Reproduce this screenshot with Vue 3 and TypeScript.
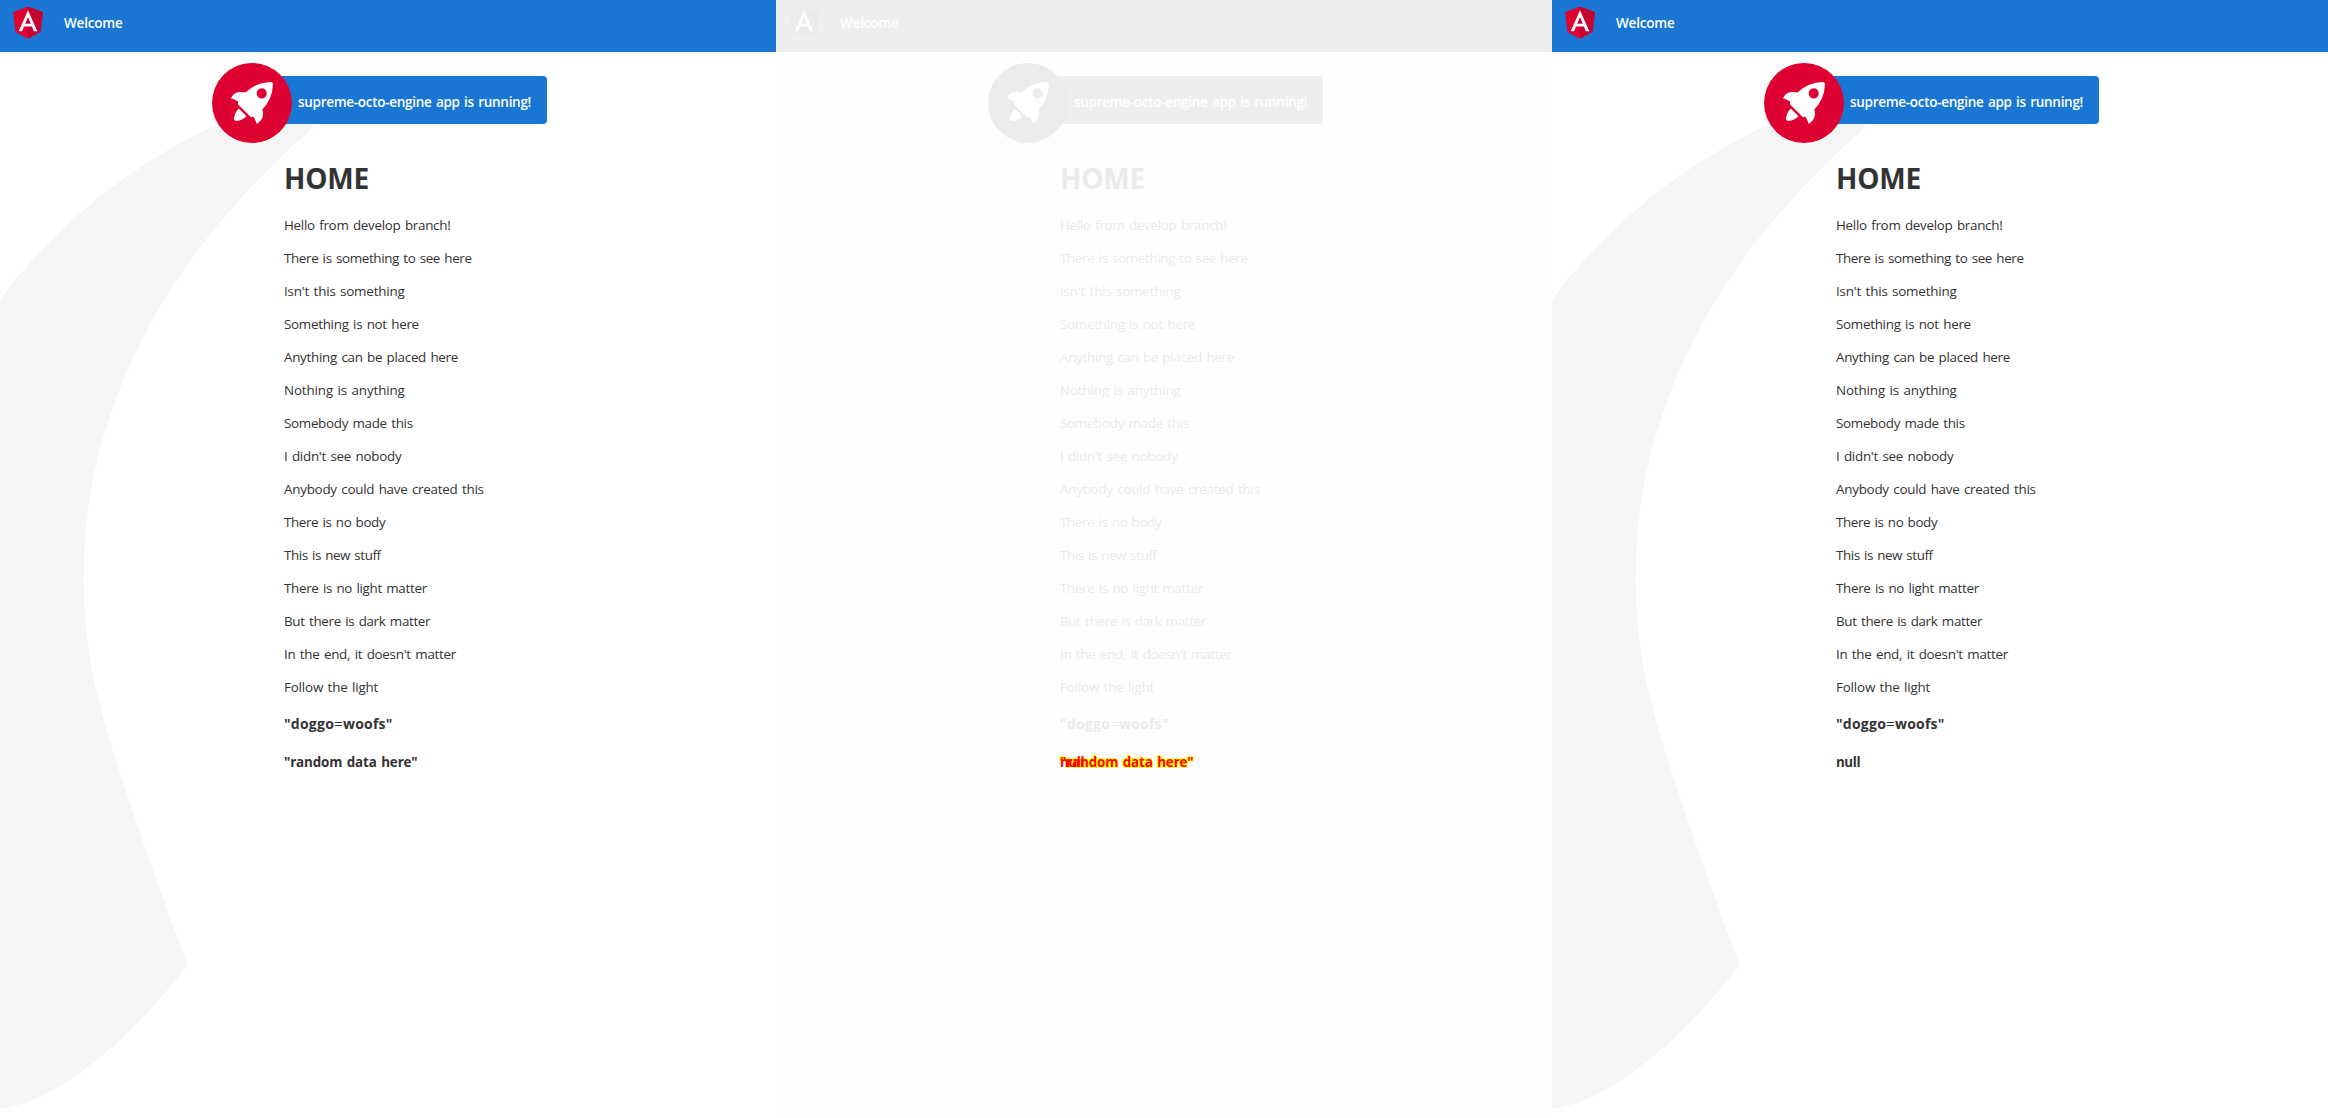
<script setup lang="ts">
interface Line {
  text: string
  tracking: number
}

interface Panel {
  id: string
  diff: boolean
  stored: Line
}

const lines: Line[] = [
  { text: 'Hello from develop branch!', tracking: -0.28 },
  { text: 'There is something to see here', tracking: -0.36 },
  { text: "Isn't this something", tracking: -0.19 },
  { text: 'Something is not here', tracking: -0.28 },
  { text: 'Anything can be placed here', tracking: -0.28 },
  { text: 'Nothing is anything', tracking: -0.14 },
  { text: 'Somebody made this', tracking: -0.3 },
  { text: "I didn't see nobody", tracking: -0.26 },
  { text: 'Anybody could have created this', tracking: -0.25 },
  { text: 'There is no body', tracking: -0.38 },
  { text: 'This is new stuff', tracking: -0.41 },
  { text: 'There is no light matter', tracking: -0.31 },
  { text: 'But there is dark matter', tracking: -0.33 },
  { text: "In the end, it doesn't matter", tracking: -0.27 },
  { text: 'Follow the light', tracking: -0.18 },
]

const randomData: Line = { text: '"random data here"', tracking: -0.14 }
const empty: Line = { text: 'null', tracking: -0.43 }

const panels: Panel[] = [
  { id: 'baseline', diff: false, stored: randomData },
  { id: 'diff', diff: true, stored: randomData },
  { id: 'current', diff: false, stored: empty },
]
</script>

<template>
  <main class="comparison">
    <section v-for="panel in panels" :key="panel.id" class="panel" :class="{ diff: panel.diff }">
      <svg class="smoke" viewBox="0 0 516.119 1083.632" aria-hidden="true">
        <path
          transform="translate(-147.02 -140.939)"
          d="M644.6,141S143.02,215.537,147.049,870.207s342.774,201.755,342.774,201.755S404.659,847.213,388.815,762.2c-27.116-145.51-11.551-384.124,271.9-609.1C671.15,139.365,644.6,141,644.6,141Z"
        />
      </svg>

      <header class="toolbar">
        <svg class="logo" viewBox="0 0 250 250" aria-hidden="true">
          <path class="shield" d="M125 30L31.9 63.2l14.2 123.1L125 230l78.9-43.7 14.2-123.1z" />
          <path class="shield-side" d="M125 30v22.2-.1V230l78.9-43.7 14.2-123.1L125 30z" />
          <path
            class="mark"
            d="M125 52.1L66.8 182.6h21.7l11.7-29.2h49.4l11.7 29.2H183L125 52.1zm17 83.3h-34l17-40.9 17 40.9z"
          />
        </svg>
        <span class="welcome">Welcome</span>
      </header>

      <div class="content">
        <div class="card">
          <svg class="rocket" viewBox="0 0 101.678 101.678" aria-hidden="true">
            <circle class="disc" cx="50.839" cy="50.839" r="50.839" />
            <g class="mark" transform="translate(24.185 24.185)">
              <path
                transform="translate(0.371 3.363)"
                d="M3.4,42.615a3.084,3.084,0,0,0,3.553,3.553,21.419,21.419,0,0,0,12.215-6.107L9.511,30.4A21.419,21.419,0,0,0,3.4,42.615Z"
              />
              <path
                d="M53.3,3.221A3.09,3.09,0,0,0,50.081,0,48.227,48.227,0,0,0,18.322,13.437c-6-1.666-14.991-1.221-18.322,7.218A33.892,33.892,0,0,1,9.439,25.1l-.333.666a3.013,3.013,0,0,0,.555,3.553L23.985,43.641a2.9,2.9,0,0,0,3.553.555l.666-.333A33.892,33.892,0,0,1,32.647,53.3c8.55-5.664,8.884-12.326,7.218-18.322A48.227,48.227,0,0,0,53.3,3.221ZM34.424,9.772a6.439,6.439,0,1,1,9.106,9.106,6.368,6.368,0,0,1-9.106,0A6.467,6.467,0,0,1,34.424,9.772Z"
              />
            </g>
          </svg>
          <span class="running">supreme-octo-engine app is running!</span>
        </div>

        <div class="text">
          <h1>HOME</h1>
          <p v-for="line in lines" :key="line.text" :style="{ letterSpacing: line.tracking + 'px' }">
            {{ line.text }}
          </p>
          <h4 class="pair">"doggo<span class="equals">=</span>woofs"</h4>
          <h4 class="stored" :style="{ letterSpacing: panel.stored.tracking + 'px' }">
            {{ panel.stored.text }}
            <span v-if="panel.diff" class="ghost" :style="{ letterSpacing: empty.tracking + 'px' }">{{ empty.text }}</span>
          </h4>
        </div>
      </div>
    </section>
  </main>
</template>

<style>
body {
  margin: 0;
  background: #fff;
}
</style>

<style scoped>
.comparison {
  display: flex;
  width: 2328px;
  height: 1118px;
  overflow: hidden;
}

.panel {
  --bar: #1976d2;
  --red: #dd0031;
  --red-dark: #c3002f;
  --ink: #333;
  --smoke: #f5f5f5;
  position: relative;
  z-index: 0;
  flex: 0 0 776px;
  height: 1118px;
  overflow: hidden;
  color: var(--ink);
  font-family: "Open Sans", "Noto Sans", sans-serif;
  font-size: 13.4px;
  word-spacing: 1.2px;
}

.panel.diff {
  --bar: #eee;
  --red: #ebebeb;
  --red-dark: #eaeaea;
  --ink: #eaeaea;
  --smoke: #fdfdfd;
  background: #fefefe;
}

.smoke {
  position: absolute;
  z-index: -1;
  top: 86px;
  left: -135.8px;
  height: 1023.5px;
  fill: var(--smoke);
}

.toolbar {
  display: flex;
  align-items: flex-start;
  height: 52px;
  background: var(--bar);
  color: #fff;
}

.logo {
  width: 40px;
  height: 40px;
  margin: 2px 16px 0 8px;
}

.shield,
.disc {
  fill: var(--red);
}

.shield-side {
  fill: var(--red-dark);
}

.mark {
  fill: #fff;
}

.welcome {
  line-height: 47px;
  font-size: 13.5px;
  font-weight: 600;
  letter-spacing: -0.2px;
}

.content {
  padding: 24px 0 0 228px;
}

.card {
  display: flex;
  align-items: center;
  box-sizing: border-box;
  width: 319px;
  height: 48px;
  border-radius: 4px;
  background: var(--bar);
  color: #fff;
}

.rocket {
  flex: none;
  width: 80px;
  height: 80px;
  margin: 6px 6px 0 -16px;
}

.running {
  line-height: 50px;
  margin-top: 3px;
  font-size: 13.5px;
  font-weight: 600;
  letter-spacing: -0.29px;
  white-space: nowrap;
}

.text {
  padding: 34px 0 0 56px;
}

h1 {
  margin: 0 0 11px;
  font-size: 28px;
  font-weight: 700;
  line-height: 40px;
  letter-spacing: -0.2px;
}

p {
  margin: 0;
  line-height: 33px;
}

h4 {
  margin: 0;
  font-size: 13.4px;
  font-weight: 700;
  line-height: 38px;
}

.pair {
  margin-top: 1px;
  font-size: 14px;
  letter-spacing: 0.24px;
}

.equals {
  font-size: 15px;
  font-weight: 400;
  line-height: 1;
}

.stored {
  position: relative;
  white-space: nowrap;
}

.diff .stored {
  color: #f00;
  text-shadow: 1px 0 #ff0, -1px 0 #ff0, 0 1px #ff0, 0 -1px #ff0, 1px 1px #ff0, -1px -1px #ff0;
}

.ghost {
  position: absolute;
  top: 0;
  left: 0;
  text-shadow: none;
}
</style>
